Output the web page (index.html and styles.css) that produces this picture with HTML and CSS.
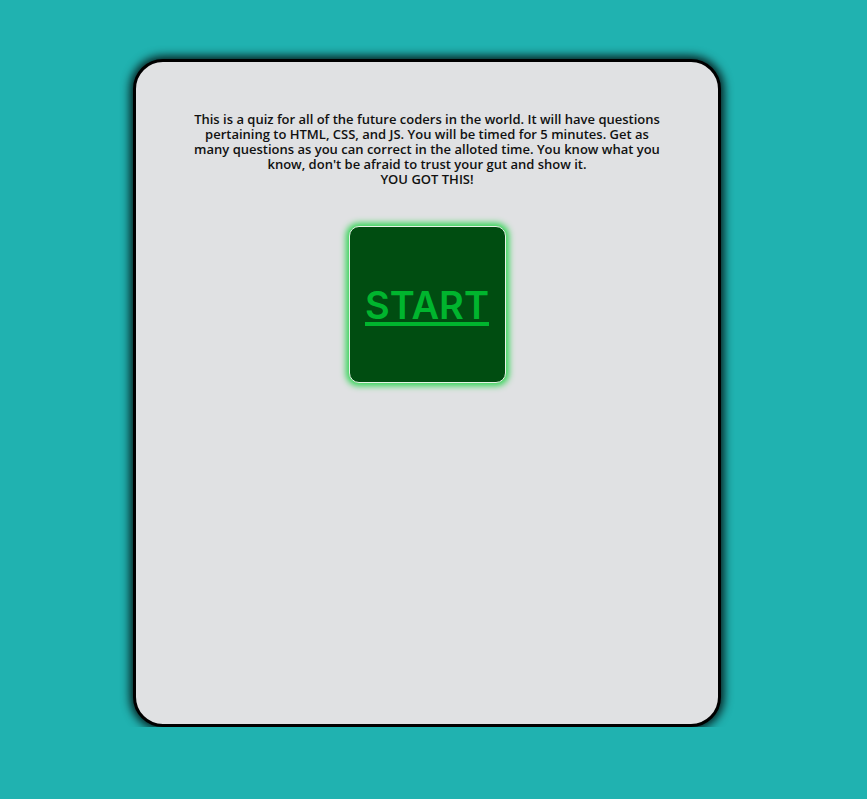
FILE: index.html
```html
<!DOCTYPE html>
<html>
<head>
<meta charset="utf-8">
<link rel="stylesheet" href="styles.css">
</head>
<body>
<main class="card">
  <p class="intro">This is a quiz for all of the future coders in the world. It will have questions pertaining to HTML, CSS, and JS. You will be timed for 5 minutes. Get as many questions as you can correct in the alloted time. You know what you know, don't be afraid to trust your gut and show it.<br>YOU GOT THIS!</p>
  <button class="start"><span>START</span></button>
</main>
</body>
</html>
```
FILE: styles.css
```css
html, body {
  margin: 0;
  padding: 0;
  background: #20b2b0;
}
body {
  padding-top: 59px;
  font-family: "Open Sans", "Liberation Sans", sans-serif;
}
.card {
  box-sizing: border-box;
  width: 588px;
  height: 668px;
  margin-left: 133px;
  background: #e0e1e3;
  border: 3px solid #000;
  border-radius: 30px;
  box-shadow: 0 0 10px 3px rgba(0,0,0,0.85);
  display: flex;
  flex-direction: column;
  align-items: center;
  padding-top: 50px;
}
.intro {
  margin: 0;
  width: 480px;
  text-align: center;
  font-size: 13px;
  line-height: 15px;
  font-weight: 600;
  color: #111;
}
.start {
  margin-top: 39px;
  width: 157px;
  height: 157px;
  background: #004d11;
  border: 1px solid #e6f2e6;
  border-radius: 10px;
  box-shadow: 0 0 6px 3px #33d455;
  display: flex;
  align-items: center;
  justify-content: center;
  padding: 0;
  font-family: "Inter", "Open Sans", sans-serif;
}
.start span {
  color: #00b52e;
  font-size: 38px;
  font-weight: 600;
  text-decoration: underline;
  text-decoration-thickness: 4px;
  text-underline-offset: 3px;
}
```
